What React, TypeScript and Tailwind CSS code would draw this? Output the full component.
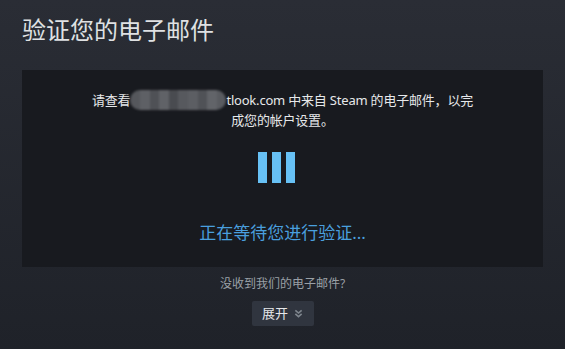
const font = "font-['Noto_Sans','Noto_Sans_CJK_SC',sans-serif]"

const mosaic = ['#55575c', '#5e6065', '#4f5156', '#606267', '#494b50', '#57595e', '#5c5e63', '#505257', '#626469', '#595b60']

const App = () => {
  return (
    <div className={`h-[349px] w-[565px] overflow-hidden bg-gradient-to-b from-[#2a2d35] to-[#1f2229] ${font}`}>
      <h1 className="px-[22px] pt-[14px] text-[24px] leading-[32px] text-[#dfe1e3]">验证您的电子邮件</h1>

      {/* Panel */}
      <div className="mx-[22px] mt-[24px] flex h-[197px] flex-col items-center bg-[#181a1f] pt-[20px]">
        <p className="w-[392px] text-center text-[13px] leading-[20px] tracking-[-0.2px] text-[#e6e8ea]">
          请查看
          <span className="inline-flex h-[20px] w-[96px] overflow-hidden rounded-full align-top blur-[1px]">
            {mosaic.map((c, i) => (
              <span key={i} className="h-full flex-1" style={{ backgroundColor: c }} />
            ))}
          </span>
          tlook.com 中来自 Steam 的电子邮件，以完成您的帐户设置。
        </p>

        {/* Bars */}
        <div className="mt-[22px] flex -translate-x-[6px] gap-[5px]">
          <div className="h-[31px] w-[9px] bg-[#67c1f5]" />
          <div className="h-[31px] w-[9px] bg-[#67c1f5]" />
          <div className="h-[31px] w-[9px] bg-[#67c1f5]" />
        </div>

        <p className="mt-[38px] text-[17px] leading-[24px] text-[#4a9fde]">正在等待您进行验证...</p>
      </div>

      <p className="mt-[9px] text-center text-[12px] leading-[16px] text-[#9aa0a6]">没收到我们的电子邮件?</p>

      <div className="mt-[9px] flex justify-center">
        <button className="flex h-[25px] w-[62px] items-center justify-center gap-[6px] rounded-[2px] bg-[#30353f] text-[13px] text-[#e6e8ea]">
          展开
          <svg width="9" height="9" viewBox="0 0 10 10" fill="none" stroke="#7e858d" strokeWidth="1.8">
            <path d="M1.5 1.5 5 4.5 8.5 1.5" />
            <path d="M1.5 5.5 5 8.5 8.5 5.5" />
          </svg>
        </button>
      </div>
    </div>
  )
}

export default App
